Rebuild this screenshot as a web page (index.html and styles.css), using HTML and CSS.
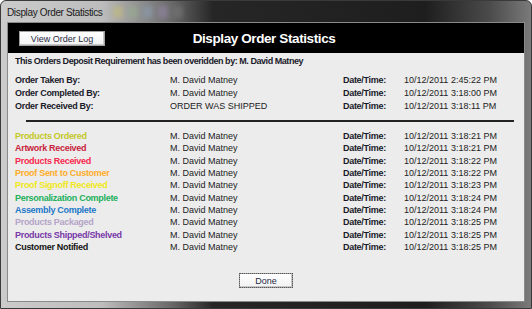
FILE: index.html
```html
<!DOCTYPE html>
<html>
<head>
<meta charset="utf-8">
<link rel="stylesheet" href="styles.css">
</head>
<body>
<div class="window">
  <div class="titlebar">
    <span class="title-text">Display Order Statistics</span>
    <span class="blur-icons"><i class="b1"></i><i class="b2"></i><i class="b3"></i><i class="b4"></i><i class="b5"></i></span>
  </div>
  <div class="client">
    <div class="header">
      <button class="btn log-btn">View Order Log</button>
      <div class="header-title">Display Order Statistics</div>
    </div>
    <div class="content">
      <div class="deposit">This Orders Deposit Requirement has been overidden by: M. David Matney</div>
      <div class="grid top">
        <div class="lbl">Order Taken By:</div><div class="val">M. David Matney</div><div class="lbl">Date/Time:</div><div class="val">10/12/2011 2:45:22 PM</div>
        <div class="lbl">Order Completed By:</div><div class="val">M. David Matney</div><div class="lbl">Date/Time:</div><div class="val">10/12/2011 3:18:00 PM</div>
        <div class="lbl">Order Received By:</div><div class="val">ORDER WAS SHIPPED</div><div class="lbl">Date/Time:</div><div class="val">10/12/2011 3:18:11 PM</div>
      </div>
      <div class="sep"></div>
      <div class="grid steps">
        <div class="lbl c-ordered">Products Ordered</div><div class="val">M. David Matney</div><div class="lbl">Date/Time:</div><div class="val">10/12/2011 3:18:21 PM</div>
        <div class="lbl c-artwork">Artwork Received</div><div class="val">M. David Matney</div><div class="lbl">Date/Time:</div><div class="val">10/12/2011 3:18:21 PM</div>
        <div class="lbl c-received">Products Received</div><div class="val">M. David Matney</div><div class="lbl">Date/Time:</div><div class="val">10/12/2011 3:18:22 PM</div>
        <div class="lbl c-proofsent">Proof Sent to Customer</div><div class="val">M. David Matney</div><div class="lbl">Date/Time:</div><div class="val">10/12/2011 3:18:22 PM</div>
        <div class="lbl c-signoff">Proof Signoff Received</div><div class="val">M. David Matney</div><div class="lbl">Date/Time:</div><div class="val">10/12/2011 3:18:23 PM</div>
        <div class="lbl c-person">Personalization Complete</div><div class="val">M. David Matney</div><div class="lbl">Date/Time:</div><div class="val">10/12/2011 3:18:24 PM</div>
        <div class="lbl c-assembly">Assembly Complete</div><div class="val">M. David Matney</div><div class="lbl">Date/Time:</div><div class="val">10/12/2011 3:18:24 PM</div>
        <div class="lbl c-packaged">Products Packaged</div><div class="val">M. David Matney</div><div class="lbl">Date/Time:</div><div class="val">10/12/2011 3:18:25 PM</div>
        <div class="lbl c-shipped">Products Shipped/Shelved</div><div class="val">M. David Matney</div><div class="lbl">Date/Time:</div><div class="val">10/12/2011 3:18:25 PM</div>
        <div class="lbl c-notified">Customer Notified</div><div class="val">M. David Matney</div><div class="lbl">Date/Time:</div><div class="val">10/12/2011 3:18:25 PM</div>
      </div>
      <div class="footer">
        <button class="btn done-btn">Done</button>
      </div>
    </div>
  </div>
</div>
</body>
</html>
```
FILE: styles.css
```css
html, body {
  margin: 0;
  padding: 0;
  background: #ffffff;
}
body {
  font-family: "Liberation Sans", Arial, sans-serif;
}
.window {
  width: 532px;
  height: 309px;
  box-sizing: border-box;
  border-radius: 6px 6px 0 0;
  background: linear-gradient(90deg, #cbcbcb 0%, #bdbdbd 19%, #6a6a6a 32%, #262626 40%, #1e1e1e 80%, #4a4a4a 92%, #7a7a7a 100%);
  border: 1px solid #3a3a3a;
  padding: 0 6px 6px 6px;
  display: flex;
  flex-direction: column;
}
.titlebar {
  height: 21px;
  display: flex;
  align-items: center;
}
.title-text {
  font-family: "Liberation Sans", Arial, sans-serif;
  font-size: 10px;
  letter-spacing: -0.35px;
  color: #1a1a1a;
  padding-top: 1px;
}
.blur-icons {
  display: flex;
  gap: 5px;
  margin-left: 10px;
  filter: blur(2px);
  opacity: 0.5;
}
.blur-icons i {
  display: block;
  width: 10px;
  height: 12px;
  border-radius: 2px;
}
.b1 { background: #c8c070; }
.b2 { background: #9ab090; }
.b3 { background: #8aa0b8; }
.b4 { background: #9a88b0; }
.b5 { background: #7a7a7a; }
.client {
  flex: 1;
  background: #ececec;
  display: flex;
  flex-direction: column;
  border: 1px solid #8a8a8a;
}
.header {
  height: 30px;
  background: #000;
  display: flex;
  align-items: center;
  position: relative;
  padding-left: 11px;
}
.btn {
  font-family: "Liberation Sans", Arial, sans-serif;
  font-size: 9px;
  color: #1f2a44;
  background: linear-gradient(#ffffff, #f2f2f2);
  border: 1px solid #a0a0a0;
  box-shadow: inset -1px -1px 0 #c8c8c8;
  padding: 0;
  margin: 0;
}
.log-btn {
  width: 86px;
  height: 15px;
  margin-top: 1px;
}
.header-title {
  position: absolute;
  left: 0;
  right: 0;
  top: 0;
  bottom: 0;
  display: flex;
  align-items: center;
  justify-content: center;
  color: #fff;
  font-weight: bold;
  font-size: 13.5px;
  letter-spacing: -0.4px;
  padding-right: 4px;
  pointer-events: none;
}
.content {
  flex: 1;
  padding: 3px 0 0 7px;
  display: flex;
  flex-direction: column;
  font-size: 9px;
  color: #222;
}
.deposit {
  font-weight: bold;
  color: #1a1a2a;
  line-height: 11px;
  letter-spacing: -0.45px;
}
.grid {
  display: grid;
  grid-template-columns: 155px 173px 61px auto;
}
.grid.top {
  margin-top: 7px;
  line-height: 13px;
}
.grid.steps {
  line-height: 12.33px;
  margin-top: 1px;
}
.lbl {
  font-weight: bold;
  color: #1a1a2a;
  letter-spacing: -0.3px;
}
.val {
  color: #222;
}
.sep {
  height: 2px;
  background: #222;
  margin: 7px 10px 7px 11px;
}
.c-ordered { color: #c4c828; }
.c-artwork { color: #c81e3c; }
.c-received { color: #f8284e; }
.c-proofsent { color: #ffac28; }
.c-signoff { color: #f0e818; }
.c-person { color: #22b05a; }
.c-assembly { color: #1c78c8; }
.c-packaged { color: #b4a4c8; }
.c-shipped { color: #7838a8; }
.c-notified { color: #141414; }
.footer {
  flex: 1;
  display: flex;
  justify-content: center;
  align-items: flex-start;
  padding-top: 20px;
  padding-right: 7px;
}
.done-btn {
  width: 54px;
  height: 15px;
  outline: 1px dotted #555;
  outline-offset: -1px;
}
```
